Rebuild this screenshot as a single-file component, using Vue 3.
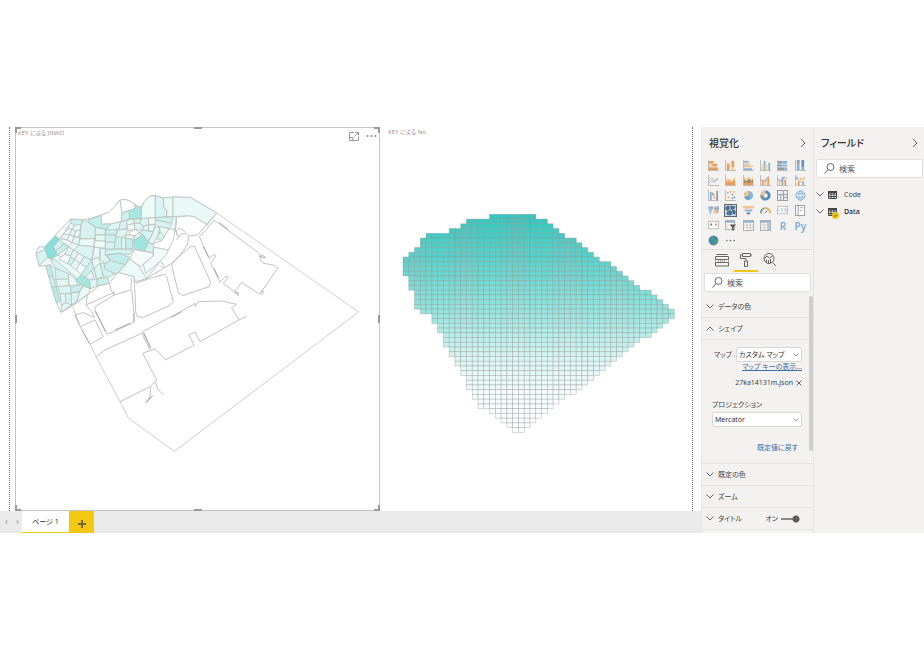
<script setup>
import { ref } from 'vue'

const hull = '212,297 247,300 268,296 304,285 325,278 345,258 360,240 375,238 395,246 415,260 424,260 433,245 447,230 463,226 490,234 519,231 571,232 650,279 620,313 583,290 565,287 528,292 525,330 505,390 480,425 440,475 405,486 402,470 356,457 328,490 292,498 271,506 230,547 183,577 169,548 138,437 118,439 108,400 118,380 135,382 165,347'

const districts = [
  ['#d8f4f2', '108,400 137,387 143,410 118,439'],
  ['#ffffff', '108,400 118,380 135,382 137,387'],
  ['#f7fcfc', '212,297 165,347 177,357 195,335 205,318 215,308'],
  ['#cdf1ee', '212,297 247,300 243,316 232,313 222,318 213,308'],
  ['#f1fbfa', '205,318 213,308 222,318 216,328 208,326'],
  ['#e6f8f6', '222,318 232,313 243,316 240,330 222,334 216,328'],
  ['#f4fcfb', '195,335 208,326 216,328 208,345 192,342'],
  ['#dbf5f3', '208,345 216,328 228,333 222,350'],
  ['#f0fafa', '228,333 241,330 238,350 222,350'],
  ['#e8f8f7', '184,350 192,342 208,345 202,360 186,357'],
  ['#f5fcfb', '202,360 208,345 222,350 216,368'],
  ['#dff6f4', '216,368 222,350 240,352 236,376'],
  ['#eaf9f7', '186,357 202,360 216,368 205,378 180,362'],
  ['#d4f3f0', '160,380 177,358 192,372 166,393'],
  ['#c9f0ed', '166,393 192,372 206,381 172,405'],
  ['#eaf9f7', '172,405 206,381 216,390 184,410'],
  ['#d6f3f1', '243,316 252,298 268,310 286,321 286,356 240,357'],
  ['#c2edea', '266,298 304,286 305,312 335,311 316,328 290,322 266,308'],
  ['#e9f9f7', '240,357 284,356 282,380 236,376'],
  ['#ddf5f3', '286,322 316,328 316,345 286,345'],
  ['#e5f8f6', '286,345 316,345 316,363 286,363'],
  ['#f2fbfa', '284,363 316,363 316,384 282,382'],
  ['#c9f0ed', '316,330 352,325 348,345 316,345'],
  ['#cef1ee', '316,345 347,345 345,367 316,367'],
  ['#d5f3f1', '316,367 345,367 343,388 316,386'],
  ['#e0f6f4', '335,311 362,304 356,327 316,330'],
  ['#d3f2f0', '362,304 382,300 380,326 356,330'],
  ['#dcf5f3', '354,330 380,327 380,345 365,352 347,350'],
  ['#cdf0ee', '347,350 365,352 365,387 343,386'],
  ['#dff6f4', '365,352 376,354 378,388 365,387'],
  ['#c6efec', '376,354 397,358 398,386 378,388'],
  ['#ffffff', '304,285 325,278 345,258 360,240 366,278 364,304 335,311 305,312'],
  ['#ffffff', '360,240 375,238 395,246 405,255 406,265 388,272 366,278'],
  ['#cdf1ee', '366,278 388,272 388,299 364,304'],
  ['#a6e7e2', '388,272 406,265 405,255 415,260 424,260 424,296 388,296'],
  ['#ecfaf8', '424,262 433,245 447,230 466,227 466,293 424,296'],
  ['#d9f4f2', '466,227 490,234 492,262 500,270 500,290 466,293'],
  ['#eaf9f7', '490,234 519,231 519,290 500,290 500,270 492,262'],
  ['#e9f9f7', '519,231 571,232 650,279 620,313 583,290 565,287 519,290'],
  ['#e4f7f5', '380,300 403,298 402,310 382,316'],
  ['#d7f4f1', '403,298 424,296 420,310 402,310'],
  ['#f0fbfa', '382,316 402,310 405,328 384,332'],
  ['#ddf6f3', '402,310 420,310 430,318 428,331 405,328'],
  ['#ffffff', '388,337 405,328 417,338 405,347 390,345'],
  ['#e8f9f7', '380,345 390,345 405,347 397,358 376,354'],
  ['#dff6f4', '405,347 417,338 429,344 399,363'],
  ['#dcf5f3', '424,296 445,294 447,315 430,318 420,310'],
  ['#ecfaf8', '445,294 466,293 466,312 447,315'],
  ['#cdf1ee', '466,293 519,290 515,310 466,300'],
  ['#d7f4f1', '466,300 515,310 508,326 478,320 466,312'],
  ['#dbf5f3', '430,318 447,315 445,332 428,331'],
  ['#e6f8f6', '447,315 466,314 460,335 445,332'],
  ['#d4f3f1', '417,338 428,331 460,335 455,346 443,364 429,344'],
  ['#e2f7f5', '455,346 466,320 478,322 475,346 458,372 445,366'],
  ['#d5f3f1', '475,346 480,334 494,350 485,362 470,355'],
  ['#e7f8f6', '478,320 508,326 494,350 480,334'],
  ['#d3f2f0', '445,368 461,374 459,400 433,392'],
  ['#ffffff', '508,326 525,330 520,360 505,390 461,382 458,372 485,362'],
  ['#f0fbfa', '461,382 505,390 500,402 480,425 437,460 430,432 459,408'],
  ['#ecfaf8', '390,417 415,437 440,475 405,486 402,470 356,457'],
  ['#f8fdfc', '403,388 459,400 459,408 430,432 422,440 390,417'],
  ['#d1f2ef', '343,388 400,388 388,404 360,400 316,405 316,390'],
  ['#bfedea', '320,405 360,400 388,412 376,434 330,422'],
  ['#c9f0ed', '316,430 330,422 376,434 356,457 345,462 312,445'],
  ['#dff6f4', '300,386 316,386 316,405 330,422 316,430 300,418'],
  ['#e9f9f7', '282,382 300,384 298,412 275,418 280,400'],
  ['#d9f4f2', '236,376 282,380 275,420 252,410 220,390'],
  ['#e6f8f6', '206,381 220,390 213,407 194,404'],
  ['#f4fcfb', '184,410 194,404 213,407 205,432 178,420'],
  ['#dff6f4', '220,390 236,400 224,418 210,412'],
  ['#eaf9f7', '236,400 252,410 240,430 224,418'],
  ['#d2f2f0', '210,412 224,418 212,437 204,430'],
  ['#e3f7f5', '224,418 240,430 228,450 212,437'],
  ['#dcf5f3', '252,410 275,420 260,442 240,430'],
  ['#f0fbfa', '240,430 260,442 243,464 228,450'],
  ['#c9f0ed', '275,420 243,464 256,472 283,445'],
  ['#e6f8f6', '256,472 274,452 283,472 268,480'],
  ['#d9f4f2', '274,452 283,445 290,475 283,472'],
  ['#e9f9f7', '275,420 298,412 300,430 283,445'],
  ['#cff1ef', '300,430 316,430 312,445 345,462 325,472 310,470'],
  ['#ddf6f3', '283,445 300,430 310,470 290,478'],
  ['#c9f0ed', '290,478 322,472 328,490 292,498'],
  ['#dff6f4', '268,480 290,478 292,498 271,506'],
  ['#d8f4f2', '152,422 165,418 230,474 229,486 205,465 172,448'],
  ['#bdebe8', '137,437 150,434 160,468 146,470'],
  ['#c9f0ed', '146,470 160,468 169,500 155,502'],
  ['#b6ebe7', '155,502 169,500 180,545 169,548'],
  ['#dff6f4', '150,434 165,445 172,478 163,480'],
  ['#d5f3f1', '165,445 205,460 205,477 168,478'],
  ['#e3f7f5', '168,478 205,477 207,497 173,500'],
  ['#d9f4f2', '173,500 212,497 213,520 180,522'],
  ['#eaf9f7', '205,460 229,480 243,493 207,497'],
  ['#c6efec', '212,502 243,493 250,498 238,515 213,518'],
  ['#d9f4f2', '213,520 240,515 230,545 215,555'],
  ['#ecfaf8', '240,515 250,498 271,506 266,520 230,547'],
  ['#e0f6f4', '180,522 196,520 198,548 185,555'],
  ['#d4f3f1', '196,520 213,520 215,555 198,548'],
  ['#dff6f4', '183,577 185,555 198,548 215,555'],
  ['#88dfd9', '133,382 165,347 177,357 174,364 160,380 172,405 155,418 143,413'],
  ['#9fe5df', '399,363 429,344 445,368 433,392 403,388'],
  ['#a3e6e0', '229,479 243,464 268,480 271,506 229,486']
]

const coast = [
  '650,279 1076,576 523,994 385,894 360,845 288,710 270,673 240,620 218,560',
  '183,577 218,557 262,525 295,500',
  '262,525 258,555 275,575 283,592 250,578 224,585',
  '328,490 333,510 343,525 392,510 395,475',
  '343,525 343,515', '343,525 285,560 285,575 300,600 322,643 402,607 402,580 395,510',
  '240,620 285,600 310,650 270,673', '258,555 343,517',
  '402,480 405,520 407,575 412,590 430,592 510,556 520,545 500,470 495,463 460,472 412,488 408,492',
  '440,475 515,430 540,405 562,375 566,350 555,335 540,325 529,332 531,345 540,349 545,340 555,342',
  '483,425 493,438 488,444 480,436', '528,292 530,305 526,330',
  '515,432 517,445 535,518 548,527 627,500 632,487 584,380 573,379 545,402 515,432',
  '566,348 593,345 617,318 620,313', '525,330 535,350 530,360',
  '598,350 618,330 642,300 775,398 782,405 778,410 788,404 798,415',
  '782,405 782,420 790,430 825,436 833,444 780,522 785,512 790,513 787,524',
  '778,522 725,487 703,517 717,520 704,514 717,527 670,490 685,472 678,468 660,487 632,430 648,407 642,403 628,415 598,350',
  '650,279 618,318',
  '288,710 315,690 425,640 430,634 545,573 585,550 585,560 595,545 665,543 710,553 695,563 717,600 740,588',
  '717,600 600,665 585,636 567,645 582,675 497,720 465,686 428,700 470,780 450,800 360,845',
  '430,634 453,686', '425,640 450,688',
  '465,785 475,810 490,823', '452,800 450,830 438,848 460,825'
]

const quay = ['658,308 684,328', '610,380 626,413', '642,445 655,472', '402,580 402,605', '345,630 390,610', '515,592 545,575', '430,640 452,683', '440,846 456,828', '225,585 238,612', '245,628 268,670', '287,574 315,633', '780,410 795,413']

const spans = [
  [15, 23], [11, 25], [10, 26], [8, 27], [4, 28], [3, 30], [3, 31], [2, 32], [1, 33], [0, 34], [0, 36], [0, 37],
  [0, 38], [1, 39], [1, 40], [1, 41], [2, 43], [2, 44], [2, 45], [2, 46], [3, 47], [5, 47], [5, 46], [6, 45],
  [6, 44], [7, 43], [7, 41], [7, 40], [8, 39], [8, 38], [9, 37], [9, 36], [10, 35], [10, 34], [11, 33], [11, 32],
  [11, 31], [12, 30], [12, 28], [13, 27], [13, 26], [15, 25], [16, 24], [17, 23], [18, 22], [19, 21]
]
const stops = [[0, 50, 200, 190], [10, 95, 211, 204], [20, 150, 228, 222], [30, 218, 245, 243], [38, 246, 252, 252], [46, 255, 255, 255]]
function shade(row) {
  const i = stops.findIndex((s) => s[0] > row)
  const a = stops[i - 1]
  const b = stops[i]
  const t = (row - a[0]) / (b[0] - a[0])
  return `rgb(${[1, 2, 3].map((k) => Math.round(a[k] + (b[k] - a[k]) * t)).join(',')})`
}
const cw = 17.32
const ch = 14.22
const cells = spans.flatMap(([from, to], r) =>
  Array.from({ length: to - from }, (_, i) => ({ x: 24 + (from + i) * cw, y: 43 + r * ch, fill: shade(r) }))
)

const axis = '<path d="M.5 0V11.5H12" fill="none" stroke="#b5b5b5"/>'
const box = (c, x, y, w, h) => `<rect x="${x}" y="${y}" width="${w}" height="${h}" fill="${c}"/>`
const O = '#ec9c59', L = '#f3c690', B = '#8bb3d7', D = '#5f93c2', G = '#989ca1'
const line = (c, d, w = 1) => `<path d="${d}" fill="none" stroke="${c}" stroke-width="${w}"/>`
const dot = (c, x, y, r = 1) => `<circle cx="${x}" cy="${y}" r="${r}" fill="${c}"/>`

const visuals = [
  ['積み上げ横棒グラフ', axis + box(O, 1, 1, 5, 3) + box(L, 1, 5, 5, 2) + box(O, 5, 4, 5, 3) + box(O, 1, 8, 10, 3)],
  ['積み上げ縦棒グラフ', axis + box(O, 2, 4, 3, 7) + box(L, 2, 3, 3, 2) + box(O, 7, 1, 3, 7) + box(L, 7, 7, 3, 4)],
  ['集合横棒グラフ', axis + box(B, 1, 1, 5, 2) + box(L, 1, 3, 7, 1) + box(B, 1, 5, 6, 1) + box(L, 1, 6, 10, 2) + box(B, 1, 9, 9, 2)],
  ['集合縦棒グラフ', axis + box(L, 2, 4, 1, 7) + box(B, 4, 1, 2, 10) + box(L, 7, 5, 1, 6) + box(B, 9, 3, 2, 8)],
  ['100% 積み上げ横棒グラフ', axis + box(G, 1, 1, 5, 3) + box(B, 6, 1, 5, 3) + box(D, 1, 5, 4, 2) + box(B, 5, 5, 6, 2) + box(G, 1, 8, 7, 3) + box(B, 8, 8, 3, 3)],
  ['100% 積み上げ縦棒グラフ', axis + box(G, 2, 0, 3, 5) + box(B, 2, 5, 3, 6) + box(D, 7, 0, 3, 8) + box(B, 7, 7, 3, 4)],
  ['折れ線グラフ', axis + line(B, 'M1 9L4 6L7 8L11 3') + line('#b5b5b5', 'M1 6L4 3L7 6L11 5')],
  ['面グラフ', axis + '<path d="M1 5L4 4L8 6L11 2V11H1z" fill="#f3c690"/><path d="M1 7L5 7L8 8L11 5V11H1z" fill="#ec9c59"/>'],
  ['積み上げ面グラフ', axis + '<path d="M1 2L3 5L6 2L9 5L11 1V11H1z" fill="#f3c690"/><path d="M1 5L4 7L7 4L9 7L11 5V11H1z" fill="#8b8379"/><path d="M1 9L4 7L6 9L9 7L11 9V11H1z" fill="#ec9c59"/>'],
  ['折れ線および積み上げ縦棒', axis + box(O, 2, 6, 2, 5) + box(L, 5, 4, 2, 7) + box(O, 8, 3, 2, 8) + line(G, 'M1 5L5 7L10 1')],
  ['折れ線および集合縦棒', axis + box(L, 2, 5, 2, 6) + box(B, 5, 2, 2, 9) + box(O, 8, 5, 2, 6) + line(G, 'M1 4L4 7L8 2L11 4')],
  ['リボン グラフ', axis + box(B, 1, 2, 2, 3) + box(O, 3, 7, 2, 4) + box(L, 5, 3, 3, 3) + box(B, 8, 7, 2, 4) + line(O, 'M2 4C5 4 5 9 8 8') + box(L, 9, 2, 2, 3)],
  ['ウォーターフォール図', axis + box(B, 2, 2, 2, 9) + box('#7aa79f', 4, 3, 2, 3) + box(L, 6, 5, 2, 5) + box(G, 9, 1, 2, 10)],
  ['散布図', axis + dot(B, 3, 3) + dot(O, 6, 2) + dot(G, 8, 5) + dot(O, 4, 8) + dot(B, 8, 9) + dot(D, 10, 8) + dot(L, 10, 2)],
  ['円グラフ', '<circle cx="6" cy="6" r="5" fill="#8bb3d7"/><path d="M6 6V1A5 5 0 0 0 1.6 8z" fill="#f3c690"/><path d="M6 6L1.6 8A5 5 0 0 0 7 11z" fill="#6b9cc9"/>'],
  ['ドーナツ グラフ', '<circle cx="6" cy="6" r="4" fill="none" stroke="#4f87bb" stroke-width="3"/><path d="M6 2A4 4 0 0 0 2 6" fill="none" stroke="#f3c690" stroke-width="3"/><path d="M2 6A4 4 0 0 0 5 10" fill="none" stroke="#8b8f94" stroke-width="3"/>'],
  ['ツリーマップ', '<rect x=".5" y=".5" width="11" height="11" fill="#e6edf3" stroke="#999"/>' + line('#999', 'M7 1V11M1 5H11M4 5V11M7 8H11')],
  ['マップ', '<circle cx="6" cy="6" r="5" fill="#e4eff7" stroke="#83add4"/><ellipse cx="6" cy="6" rx="2" ry="5" fill="none" stroke="#83add4" stroke-width=".8"/>' + line('#83add4', 'M1 4H11M1 8H11', 0.8)],
  ['塗り分け地図', '<path d="M0 2L5 1L6 4L4 6L3 11L1 7z" fill="#a5bfd6"/><path d="M6 3L7 2L12 1V6L10 10L8 7z" fill="#a8b9c9"/><path d="M1 3H5M7 4H11" stroke="#888" stroke-width=".6"/><path d="M6 5L9 5L10 8L6 10z" fill="#f3c690"/>'],
  ['図形マップ', box('#c4daeb', 0, 0, 12, 12) + '<path d="M1 2L4 1L5 4L3 6L1 5zM6 1L11 2L10 4L7 5zM3 7L6 6L8 9L6 11L2 10zM8 6L11 6V10L9 9z" fill="#447daf" stroke="#34495b" stroke-width=".7"/>'],
  ['じょうご', box(L, 0, 1, 12, 3) + box(B, 2, 5, 8, 2) + box(D, 4, 8, 4, 2) + box(O, 5, 10, 2, 1)],
  ['ゲージ', '<path d="M1 9A5 5 0 0 1 5 3.5" fill="none" stroke="#70a693" stroke-width="2"/><path d="M5 3.5A5 5 0 0 1 11 9" fill="none" stroke="#f0ad56" stroke-width="2"/>' + line('#666', 'M5 9L8 6')],
  ['カード', '<rect x=".5" y="1.5" width="11" height="8" fill="#fff" stroke="#bbb"/>' + line(B, 'M2.5 4V7M4.500 4H6V5.500H5V7H6.500M8 4H10V7H8M8 5.500H10', 0.7)],
  ['複数の行カード', '<rect x=".5" y=".5" width="10" height="11" fill="#fff" stroke="#999"/>' + line('#999', 'M3.5 1V11') + line(B, 'M5 3H9M5 6H8')],
  ['KPI', '<rect x=".5" y="1.5" width="11" height="8" fill="#fff" stroke="#bbb"/><path d="M2 6L3.5 3L5 6z" fill="#568d82"/><path d="M7 6L8.5 3L10 6z" fill="#e48545"/>'],
  ['スライサー', '<rect x=".5" y=".5" width="10" height="10" fill="#fff" stroke="#aaa"/>' + box(B, 1, 1, 9, 2) + line(O, 'M2 5.5H4M2 8H4') + '<path d="M5 5H12L9.5 8V12L7.500 11V8z" fill="#555"/>'],
  ['テーブル', '<rect x=".5" y=".5" width="11" height="11" fill="#fff" stroke="#aaa"/>' + box(B, 1, 1, 10, 2) + line('#c8c8c8', 'M4.5 3V11M8 3V11M1 5.5H11M1 8.5H11')],
  ['マトリックス', '<rect x=".5" y=".5" width="11" height="11" fill="#fff" stroke="#aaa"/>' + box(B, 1, 1, 10, 2) + box('#a9c9e1', 8, 3, 3, 8) + line('#c8c8c8', 'M4.5 3V11M8 3V11M1 5.5H11M1 8.5H11')],
  ['R スクリプト', null, 'R'],
  ['Python', null, 'Py'],
  ['ArcGIS', '<circle cx="6" cy="6" r="5" fill="#3686ba" stroke="#7e8b95"/><path d="M3 3L6 2L7 5L5 7L3 6zM7 6L10 5L9 9L6 10z" fill="#4ca070"/>'],
  ['その他', '<circle cx="2" cy="6" r=".8" fill="#555"/><circle cx="6" cy="6" r=".8" fill="#555"/><circle cx="10" cy="6" r=".8" fill="#555"/>']
]

const lowerSections = ['既定の色', 'ズーム']
const map = ref('custom')
const projection = ref('mercator')
const titleOn = ref(true)
const vizQuery = ref('')
const fieldQuery = ref('')
</script>

<template>
  <main class="app">
    <section class="report">
      <div class="page">
        <article class="visual selected">
          <svg class="shape-map" viewBox="48 24 1089 1146" role="img" aria-label="KEY による JINKO">
            <g class="faint"><polyline :points="coast[0]" /></g>
            <g class="edges"><polyline v-for="(p, i) in coast.slice(1)" :key="i" :points="p" /></g>
            <g class="quays"><polyline v-for="(p, i) in quay" :key="i" :points="p" /></g>
            <g class="areas">
              <polygon :points="hull" fill="#ecf9f8" />
              <polygon v-for="([fill, pts], i) in districts" :key="i" :points="pts" :fill="fill" />
            </g>
          </svg>
          <header class="visual-head">
            <h2>KEY による JINKO</h2>
            <div class="visual-tools">
              <button type="button" aria-label="フォーカス モード">
                <svg width="10" height="9" viewBox="0 0 10 9"><path d="M5 .5H.5V8.5H9.5V4.5M6 .5H9.5V3.5M9.5 .5L5.5 4.5M.5 5.5H4V8.5" /></svg>
              </button>
              <button type="button" aria-label="その他のオプション">
                <svg class="dots" width="11" height="9" viewBox="0 0 11 9"><circle cx="1.5" cy="4" r="1" /><circle cx="5.5" cy="4" r="1" /><circle cx="9.500" cy="4" r="1" /></svg>
              </button>
            </div>
          </header>
          <i v-for="h in ['tl', 't', 'tr', 'l', 'r', 'bl', 'b', 'br']" :key="h" class="handle" :class="h"></i>
        </article>
        <article class="visual plain">
          <h2>KEY による No</h2>
          <svg class="grid-map" viewBox="0 0 870 720" role="img" aria-label="KEY による No">
            <rect v-for="(c, i) in cells" :key="i" :x="c.x" :y="c.y" :width="cw" :height="ch" :fill="c.fill" />
          </svg>
        </article>
      </div>
      <nav class="tabs">
        <button type="button" class="nav-arrow" aria-label="前へ"><svg width="4" height="6" viewBox="0 0 4 6"><path d="M3 1V5L1 3z" /></svg></button>
        <button type="button" class="nav-arrow" aria-label="次へ"><svg width="4" height="6" viewBox="0 0 4 6"><path d="M1 1V5L3 3z" /></svg></button>
        <button type="button" class="tab">ページ 1</button>
        <button type="button" class="add" aria-label="新しいページ"><svg width="8" height="8" viewBox="0 0 8 8"><path d="M4 0V8M0 4H8" /></svg></button>
      </nav>
    </section>

    <aside class="pane viz">
      <header class="pane-head">
        <h1>視覚化</h1>
        <button type="button" aria-label="折りたたむ"><svg width="6" height="8" viewBox="0 0 6 8"><path d="M1 0L5 4L1 8" /></svg></button>
      </header>
      <div class="gallery">
        <button v-for="([name, art, text], i) in visuals" :key="name" type="button" :aria-label="name" :class="{ picked: i === 19 }">
          <svg v-if="art" width="11" height="11" viewBox="0 0 12 12" v-html="art"></svg>
          <b v-else>{{ text }}</b>
        </button>
      </div>
      <div class="modes">
        <button type="button" aria-label="フィールド"><svg width="14" height="13" viewBox="0 0 14 13"><path d="M1.5 .5H12.5M.5 2.5H13.5V5.5H.5zM.5 8.5H13.5V12H.5z" /><path d="M.5 5.5V8.5M13.5 5.5V8.5M3 7H11" stroke-dasharray="1 1" /></svg></button>
        <button type="button" class="active" aria-label="書式"><svg width="12" height="14" viewBox="0 0 12 14"><path d="M2.5 .5H10.5V3.5H2.5zM2.5 2H.5V5.5H6V8M4.5 8H7.5V13.5H4.5zM10.5 2H12" /></svg></button>
        <button type="button" aria-label="分析"><svg width="14" height="14" viewBox="0 0 14 14"><circle cx="6" cy="5.5" r="5" /><path d="M9.5 9.5L13 13M1 6L4 3L6.5 5L10 2.5M3.5 10V6.5M5.5 10V7M7.5 10V6" /></svg></button>
      </div>
      <label class="search">
        <svg width="11" height="11" viewBox="0 0 11 11"><circle cx="6.5" cy="4" r="3.5" /><path d="M4 6.5L.5 10.5" /></svg>
        <input v-model="vizQuery" type="text" placeholder="検索" aria-label="視覚化を検索" />
      </label>
      <div class="settings">
        <button type="button" class="row"><svg width="8" height="5" viewBox="0 0 8 5"><path d="M.5 .5L4 4L7.5 .5" /></svg>データの色</button>
        <button type="button" class="row"><svg width="8" height="5" viewBox="0 0 8 5"><path d="M.5 4.5L4 1L7.5 4.5" /></svg>シェイプ</button>
        <div class="shape-body">
          <div class="map-row">
            <label for="map">マップ</label>
            <span class="select"><select id="map" v-model="map"><option value="custom">カスタム マップ</option></select><svg width="6" height="4" viewBox="0 0 6 4"><path d="M.5 .5L3 3L5.5 .5" /></svg></span>
          </div>
          <a class="keys" href="#keys">マップ キーの表示...</a>
          <div class="file">27ka14131m.json<button type="button" aria-label="削除"><svg width="6" height="6" viewBox="0 0 6 6"><path d="M.5 .5L5.5 5.5M5.5 .5L.5 5.5" /></svg></button></div>
          <label class="proj-label" for="proj">プロジェクション</label>
          <span class="select wide"><select id="proj" v-model="projection"><option value="mercator">Mercator</option></select><svg width="6" height="4" viewBox="0 0 6 4"><path d="M.5 .5L3 3L5.5 .5" /></svg></span>
          <a class="reset" href="#reset">既定値に戻す</a>
        </div>
        <button v-for="s in lowerSections" :key="s" type="button" class="row"><svg width="8" height="5" viewBox="0 0 8 5"><path d="M.5 .5L4 4L7.5 .5" /></svg>{{ s }}</button>
        <div class="row">
          <svg width="8" height="5" viewBox="0 0 8 5"><path d="M.5 .5L4 4L7.5 .5" /></svg>タイトル
          <label class="switch">オン<input v-model="titleOn" type="checkbox" /></label>
        </div>
        <i class="scroll"></i>
      </div>
    </aside>

    <aside class="pane fields">
      <header class="pane-head">
        <h1>フィールド</h1>
        <button type="button" aria-label="折りたたむ"><svg width="6" height="8" viewBox="0 0 6 8"><path d="M1 0L5 4L1 8" /></svg></button>
      </header>
      <label class="search">
        <svg width="11" height="11" viewBox="0 0 11 11"><circle cx="6.5" cy="4" r="3.5" /><path d="M4 6.5L.5 10.5" /></svg>
        <input v-model="fieldQuery" type="text" placeholder="検索" aria-label="フィールドを検索" />
      </label>
      <ul>
        <li v-for="t in ['Code', 'Data']" :key="t" :class="{ used: t === 'Data' }">
          <button type="button">
            <svg class="chev" width="8" height="5" viewBox="0 0 8 5"><path d="M.5 .5L4 4L7.5 .5" /></svg>
            <span class="table-icon">
              <svg width="9" height="8" viewBox="0 0 9 8"><path d="M.5 .5H8.5V7.5H.5zM.5 3H8.5M.5 5.5H8.5M3 2V8M6 2V8" /><path d="M0 1H9" stroke-width="2" /></svg>
              <svg v-if="t === 'Data'" class="badge" width="7" height="7" viewBox="0 0 7 7"><circle cx="3.5" cy="3.5" r="3.5" fill="#f2c811" stroke="none" /><path d="M2 3.5L3 4.5L5 2.5" /></svg>
            </span>
            {{ t }}
          </button>
        </li>
      </ul>
    </aside>
  </main>
</template>

<style>
body {
  background: #fff;
}
</style>

<style scoped>
* {
  box-sizing: border-box;
}
button {
  padding: 0;
  border: 0;
  background: none;
  font: inherit;
  color: inherit;
  display: flex;
  align-items: center;
  justify-content: center;
}
svg {
  display: block;
  flex: none;
  fill: none;
  stroke: #666;
}
h1,
h2,
ul {
  margin: 0;
  padding: 0;
  font-weight: 400;
  list-style: none;
}
.app {
  display: grid;
  grid-template-columns: minmax(0, 1fr) 112px 111px;
  padding-top: 127px;
  font: 7px/10px "Noto Sans", "Noto Sans CJK JP", sans-serif;
  font-feature-settings: "palt";
  color: #444;
}
.report {
  display: flex;
  flex-direction: column;
}
.page {
  flex: 1;
  display: grid;
  grid-template-columns: 365fr 304fr;
  gap: 8px;
  margin: 0 8px 0 9px;
  padding-left: 5px;
  border: dotted #777;
  border-width: 0 1px;
}
.visual h2 {
  font-size: 6px;
  line-height: 10px;
  color: #999;
}
.selected {
  position: relative;
  display: grid;
  align-content: start;
  border: 1px solid #c6c6c6;
}
.selected > .shape-map,
.visual-head {
  grid-area: 1 / 1;
}
.shape-map {
  width: 100%;
  height: auto;
}
.shape-map * {
  vector-effect: non-scaling-stroke;
}
.areas {
  stroke: #b9bfbe;
  stroke-width: 0.8px;
  stroke-linejoin: round;
}
.edges {
  stroke: #c2c2c2;
}
.faint {
  stroke: #cfcfcf;
}
.quays {
  stroke: #a9a9a9;
}
.visual-head {
  display: flex;
  justify-content: space-between;
  align-items: flex-start;
  padding-left: 2px;
}
.visual-tools {
  display: flex;
  gap: 7px;
  padding: 4px 2px 0 0;
}
.visual-tools svg {
  stroke: #999;
}
.visual-tools .dots {
  fill: #888;
  stroke: none;
}
.handle {
  position: absolute;
  border: 0 solid #999;
  width: 6px;
  height: 6px;
}
.tl { left: -1px; top: -1px; border-width: 2px 0 0 2px; }
.tr { right: -1px; top: -1px; border-width: 2px 2px 0 0; }
.bl { left: -1px; bottom: -1px; border-width: 0 0 2px 2px; }
.br { right: -1px; bottom: -1px; border-width: 0 2px 2px 0; }
.t,
.b { left: 50%; margin-left: -4px; width: 8px; height: 2px; background: #999; }
.t { top: -1px; }
.b { bottom: -1px; }
.l,
.r { top: 50%; margin-top: -4px; width: 2px; height: 8px; background: #999; }
.l { left: -1px; }
.r { right: -1px; }
.grid-map {
  display: block;
  width: 290px;
  max-width: 100%;
  height: auto;
  margin: 63px 0 0 7px;
  stroke: #8e9191;
  stroke-opacity: 0.5;
  stroke-width: 2px;
}
.tabs {
  display: flex;
  height: 22px;
  background: #eaeaea;
}
.nav-arrow {
  width: 11px;
}
.nav-arrow:nth-child(2) {
  padding-left: 3px;
}
.nav-arrow svg {
  fill: #b9b9b9;
  stroke: #b9b9b9;
  stroke-width: 0.5px;
}
.tab {
  width: 47px;
  background: #fff;
  border-bottom: 1px solid #f2c811;
  color: #333;
}
.add {
  width: 25px;
  padding-top: 3px;
  background: #f2c811;
}
.add svg {
  stroke: #766a35;
  stroke-width: 2px;
}
.pane {
  background: #f3f2f1;
  border-left: 1px solid #e6e5e4;
}
.pane-head {
  display: flex;
  justify-content: space-between;
  align-items: center;
  height: 31px;
  padding: 0 7px;
}
.fields .pane-head {
  padding-right: 6px;
}
.pane-head h1 {
  font-size: 10px;
  font-weight: 500;
  line-height: 14px;
  color: #333;
}
.gallery {
  display: grid;
  grid-template-columns: repeat(6, 1fr);
  grid-auto-rows: 15px;
  padding: 0 4px 0 3px;
  height: 91px;
}
.gallery b {
  font-size: 10px;
  font-weight: 600;
  color: #82add3;
}
.gallery svg {
  stroke: none;
}
.picked svg {
  outline: 1px solid #666;
}
.modes {
  display: flex;
  height: 23px;
  padding-left: 8px;
  border-top: 1px solid #e3e2e1;
}
.modes button {
  width: 24px;
  border-bottom: 2px solid transparent;
}
.modes .active {
  border-color: #f2c811;
}
.search {
  display: flex;
  align-items: center;
  gap: 4px;
  height: 19px;
  margin: 1px 2px 0;
  padding: 0 7px;
  background: #fff;
  border: 1px solid #e1dfdd;
  border-radius: 2px;
}
.search input {
  width: 100%;
  min-width: 0;
  border: 0;
  padding: 0;
  outline: 0;
  background: none;
  font: inherit;
  font-size: 8px;
}
.search input::placeholder {
  color: #555;
  opacity: 1;
}
.settings {
  position: relative;
  margin-top: 4px;
}
.row {
  display: flex;
  align-items: center;
  justify-content: flex-start;
  gap: 4px;
  width: 100%;
  height: 22px;
  padding-left: 4px;
  border-bottom: 1px solid #e3e2e1;
}
.shape-body {
  display: flex;
  flex-direction: column;
  align-items: flex-end;
  height: 124px;
  padding: 7px 11px 0 10px;
  border-bottom: 1px solid #e3e2e1;
}
.map-row {
  display: flex;
  align-items: center;
  gap: 4px;
}
.select {
  display: grid;
  align-items: center;
  justify-items: end;
  width: 66px;
}
.select.wide {
  width: 100%;
}
.select > * {
  grid-area: 1 / 1;
}
.select svg {
  margin-right: 3px;
  pointer-events: none;
  stroke: #999;
}
select {
  appearance: none;
  width: 100%;
  height: 15px;
  padding: 0 2px;
  border: 1px solid #d9d8d7;
  border-radius: 2px;
  background: #fff;
  font: inherit;
  font-feature-settings: inherit;
  color: #333;
}
a {
  color: #3c6ea5;
}
.file {
  display: flex;
  gap: 3px;
  margin-top: 6px;
}
.proj-label {
  align-self: flex-start;
  margin: 12px 0 2px;
}
.reset {
  margin: 16px 4px 0 0;
  text-decoration: none;
}
.switch {
  display: flex;
  align-items: center;
  gap: 3px;
  margin: 0 13px 0 auto;
}
.switch input {
  appearance: none;
  width: 19px;
  height: 8px;
  margin: 0;
  background: radial-gradient(circle at 15px 4px, #5c5b5a 3px, transparent 4px), linear-gradient(#888, #888) 0 3px / 12px 2px no-repeat;
}
.scroll {
  position: absolute;
  top: 0;
  right: 0;
  width: 4px;
  height: 155px;
  border-radius: 2px;
  background: #cfcfcf;
}
.fields .search {
  margin: 1px 1px 0 2px;
}
.fields ul {
  padding-top: 8px;
}
.fields li {
  height: 17px;
}
.fields li button {
  padding-left: 2px;
  height: 17px;
}
.table-icon {
  position: relative;
  margin: 0 7px 0 4px;
}
.table-icon svg {
  stroke: #444;
}
.used {
  font-weight: 500;
  color: #222;
}
.badge {
  position: absolute;
  left: 4px;
  top: 4px;
}
</style>
